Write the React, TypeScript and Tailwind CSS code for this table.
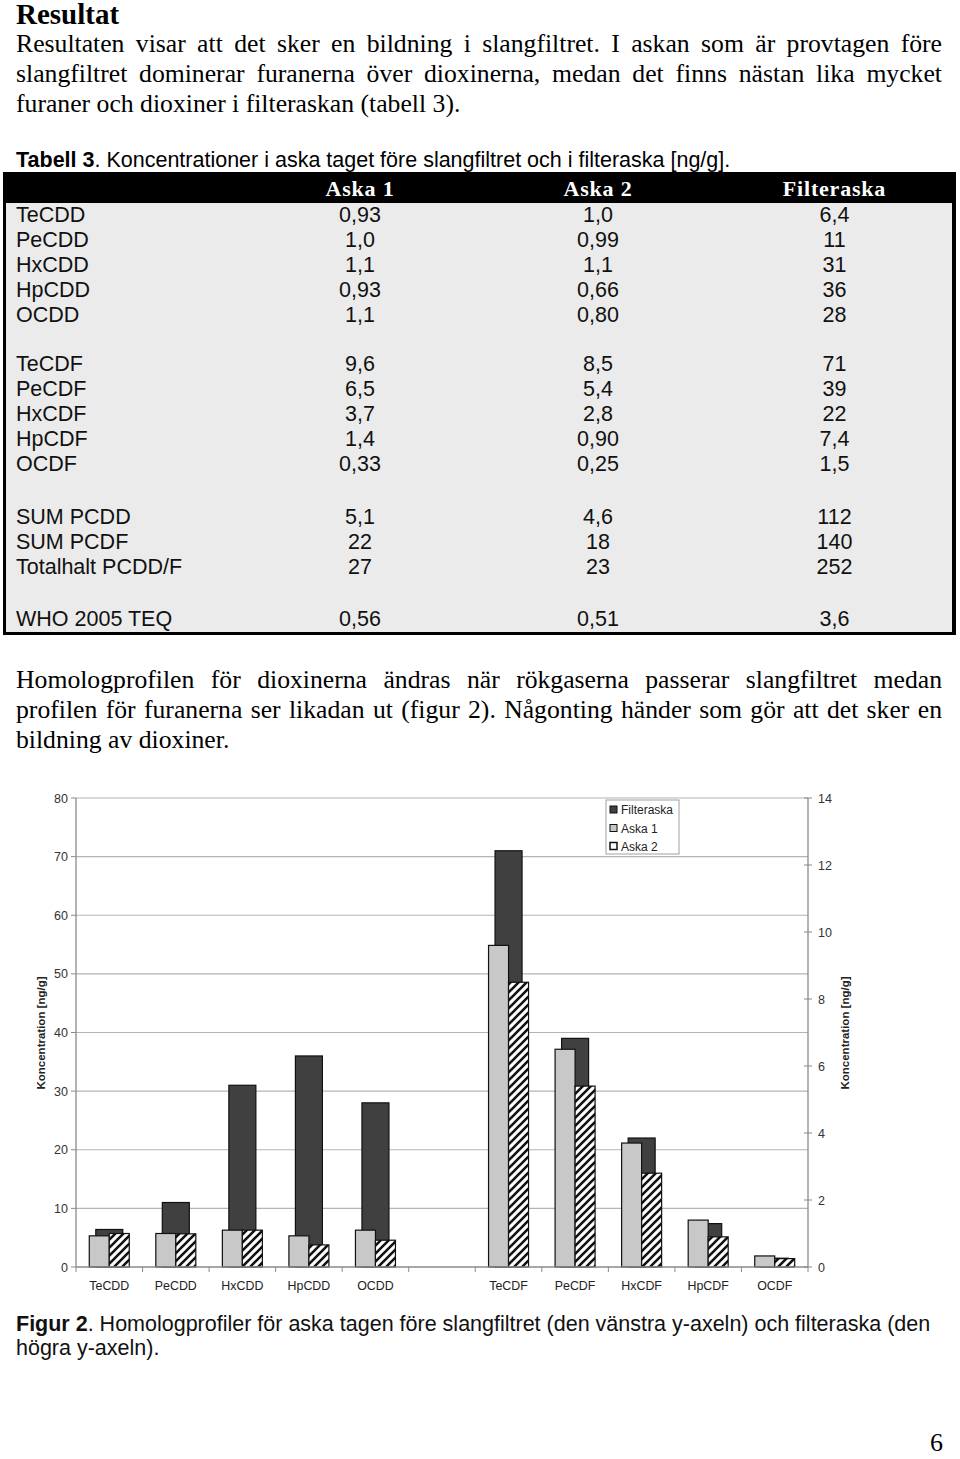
import React from 'react';

type Row = { label: string; a1: string; a2: string; f: string };

const dioxinRows: Row[] = [
  { label: 'TeCDD', a1: '0,93', a2: '1,0', f: '6,4' },
  { label: 'PeCDD', a1: '1,0', a2: '0,99', f: '11' },
  { label: 'HxCDD', a1: '1,1', a2: '1,1', f: '31' },
  { label: 'HpCDD', a1: '0,93', a2: '0,66', f: '36' },
  { label: 'OCDD', a1: '1,1', a2: '0,80', f: '28' },
];

const furanRows: Row[] = [
  { label: 'TeCDF', a1: '9,6', a2: '8,5', f: '71' },
  { label: 'PeCDF', a1: '6,5', a2: '5,4', f: '39' },
  { label: 'HxCDF', a1: '3,7', a2: '2,8', f: '22' },
  { label: 'HpCDF', a1: '1,4', a2: '0,90', f: '7,4' },
  { label: 'OCDF', a1: '0,33', a2: '0,25', f: '1,5' },
];

const sumRows: Row[] = [
  { label: 'SUM PCDD', a1: '5,1', a2: '4,6', f: '112' },
  { label: 'SUM PCDF', a1: '22', a2: '18', f: '140' },
  { label: 'Totalhalt PCDD/F', a1: '27', a2: '23', f: '252' },
];

const teqRow: Row = { label: 'WHO 2005 TEQ', a1: '0,56', a2: '0,51', f: '3,6' };

// chart data: slot index 5 is left empty between the groups
const bars = [
  { name: 'TeCDD', a1: 0.93, a2: 1.0, f: 6.4 },
  { name: 'PeCDD', a1: 1.0, a2: 0.99, f: 11 },
  { name: 'HxCDD', a1: 1.1, a2: 1.1, f: 31 },
  { name: 'HpCDD', a1: 0.93, a2: 0.66, f: 36 },
  { name: 'OCDD', a1: 1.1, a2: 0.8, f: 28 },
  null,
  { name: 'TeCDF', a1: 9.6, a2: 8.5, f: 71 },
  { name: 'PeCDF', a1: 6.5, a2: 5.4, f: 39 },
  { name: 'HxCDF', a1: 3.7, a2: 2.8, f: 22 },
  { name: 'HpCDF', a1: 1.4, a2: 0.9, f: 7.4 },
  { name: 'OCDF', a1: 0.33, a2: 0.25, f: 1.5 },
];

const TableRow: React.FC<{ row: Row }> = ({ row }) => (
  <div className="grid grid-cols-[235px_238px_238px_1fr] h-[25px] items-center leading-[25px]">
    <span className="pl-[10px] whitespace-nowrap">{row.label}</span>
    <span className="text-center">{row.a1}</span>
    <span className="text-center">{row.a2}</span>
    <span className="text-center">{row.f}</span>
  </div>
);

const JLine: React.FC<{ children: React.ReactNode; last?: boolean }> = ({ children, last }) => (
  <div className={`h-[30px] leading-[30px] whitespace-nowrap ${last ? '' : 'text-justify [text-align-last:justify]'}`}>
    {children}
  </div>
);

const Chart: React.FC = () => {
  const left = 76;
  const right = 808;
  const top = 9;
  const bottom = 478;
  const slot = (right - left) / 11;
  const ly = (v: number) => bottom - v * ((bottom - top) / 80);
  const ry = (v: number) => bottom - v * ((bottom - top) / 14);
  const leftTicks = [0, 10, 20, 30, 40, 50, 60, 70, 80];
  const rightTicks = [0, 2, 4, 6, 8, 10, 12, 14];

  return (
    <svg width="960" height="510" viewBox="0 0 960 510" className="block font-['Liberation_Sans',Arial,sans-serif]">
      <defs>
        <pattern id="hatch" patternUnits="userSpaceOnUse" width="8" height="8">
          <rect width="8" height="8" fill="#fff" />
          <path d="M-2,2 L2,-2 M0,8 L8,0 M6,10 L10,6" stroke="#111" strokeWidth="2.6" />
        </pattern>
      </defs>

      {/* grid lines */}
      {leftTicks.slice(1).map(v => (
        <line key={v} x1={left} x2={right} y1={ly(v)} y2={ly(v)} stroke="#b4b4b4" strokeWidth="1.2" />
      ))}

      {/* left axis */}
      <line x1={left} x2={left} y1={top} y2={bottom} stroke="#8a8a8a" strokeWidth="1.3" />
      {leftTicks.map(v => (
        <g key={v}>
          <line x1={left - 5} x2={left} y1={ly(v)} y2={ly(v)} stroke="#8a8a8a" />
          <text x={68} y={ly(v) + 4.5} textAnchor="end" fontSize="12.5" fill="#333">{v}</text>
        </g>
      ))}

      {/* right axis */}
      <line x1={right} x2={right} y1={top} y2={bottom} stroke="#8a8a8a" strokeWidth="1.3" />
      {rightTicks.map(v => (
        <g key={v}>
          <line x1={right - 4} x2={right + 4} y1={ry(v)} y2={ry(v)} stroke="#8a8a8a" />
          <text x={818} y={ry(v) + 4.5} fontSize="12.5" fill="#333">{v}</text>
        </g>
      ))}

      {/* bars */}
      {bars.map((b, i) => {
        if (!b) return null;
        const c = left + slot * (i + 0.5);
        return (
          <g key={b.name}>
            <rect x={c - 13.5} y={ly(b.f)} width={27} height={bottom - ly(b.f)} fill="#404040" stroke="#111" strokeWidth="1.2" />
            <rect x={c - 20} y={ry(b.a1)} width={20} height={bottom - ry(b.a1)} fill="#c8c8c8" stroke="#111" strokeWidth="1.2" />
            <rect x={c} y={ry(b.a2)} width={20} height={bottom - ry(b.a2)} fill="url(#hatch)" stroke="#111" strokeWidth="1.2" />
            <text x={c} y={500.5} textAnchor="middle" fontSize="12.4" fill="#222">{b.name}</text>
          </g>
        );
      })}

      {/* x axis */}
      <line x1={left} x2={right} y1={bottom} y2={bottom} stroke="#8a8a8a" strokeWidth="1.3" />
      {Array.from({ length: 12 }, (_, k) => (
        <line key={k} x1={left + slot * k} x2={left + slot * k} y1={bottom} y2={bottom + 5} stroke="#8a8a8a" />
      ))}

      {/* axis titles */}
      <text transform="translate(45 244) rotate(-90)" textAnchor="middle" fontSize="11.5" fontWeight="bold" fill="#222">Koncentration [ng/g]</text>
      <text transform="translate(849 244) rotate(-90)" textAnchor="middle" fontSize="11.5" fontWeight="bold" fill="#222">Koncentration [ng/g]</text>

      {/* legend */}
      <rect x={606} y={11} width={73} height={54} fill="#fff" stroke="#a0a0a0" />
      <rect x={610} y={17} width={7} height={7} fill="#404040" stroke="#111" />
      <rect x={610} y={35.5} width={7} height={7} fill="#c8c8c8" stroke="#111" />
      <rect x={610} y={53.5} width={7} height={7} fill="#fff" stroke="#111" strokeWidth="1.5" />
      <text x={621} y={25} fontSize="12" fill="#222">Filteraska</text>
      <text x={621} y={43.5} fontSize="12" fill="#222">Aska 1</text>
      <text x={621} y={61.5} fontSize="12" fill="#222">Aska 2</text>
    </svg>
  );
};

export default function App() {
  return (
    <div className="w-[960px] min-h-[1459px] bg-white text-black">
      <div className="pl-[16px] pr-[18px] font-['Liberation_Serif','Times_New_Roman',serif]">
        <h1 className="text-[29px] font-bold leading-[29px]">Resultat</h1>
        <div className="text-[25.7px]">
          <JLine>Resultaten visar att det sker en bildning i slangfiltret. I askan som är provtagen före</JLine>
          <JLine>slangfiltret dominerar furanerna över dioxinerna, medan det finns nästan lika mycket</JLine>
          <JLine last>furaner och dioxiner i filteraskan (tabell 3).</JLine>
        </div>
      </div>

      <div className="pl-[16px] mt-[29px] h-[24px] leading-[24px] text-[21.5px] whitespace-nowrap font-['Liberation_Sans',Arial,sans-serif]">
        <span className="font-bold">Tabell 3</span>. Koncentrationer i aska taget före slangfiltret och i filteraska [ng/g].
      </div>

      <div className="ml-[3px] w-[953px] border-[3px] border-r-[4px] border-black bg-[#ebebeb] text-[21.5px] font-['Liberation_Sans',Arial,sans-serif] text-[#111]">
        <div className="grid grid-cols-[235px_238px_238px_1fr] h-[28px] leading-[26px] items-center bg-black text-white font-['Liberation_Serif','Times_New_Roman',serif] font-bold text-[22px] tracking-[0.8px]">
          <span />
          <span className="text-center">Aska 1</span>
          <span className="text-center">Aska 2</span>
          <span className="text-center">Filteraska</span>
        </div>
        {dioxinRows.map(r => <TableRow key={r.label} row={r} />)}
        <div className="h-[24px]" />
        {furanRows.map(r => <TableRow key={r.label} row={r} />)}
        <div className="h-[28px]" />
        {sumRows.map(r => <TableRow key={r.label} row={r} />)}
        <div className="h-[27px]" />
        <TableRow row={teqRow} />
      </div>

      <div className="pl-[16px] pr-[18px] mt-[30px] text-[25.7px] font-['Liberation_Serif','Times_New_Roman',serif]">
        <JLine>Homologprofilen för dioxinerna ändras när rökgaserna passerar slangfiltret medan</JLine>
        <JLine>profilen för furanerna ser likadan ut (figur 2). Någonting händer som gör att det sker en</JLine>
        <JLine last>bildning av dioxiner.</JLine>
      </div>

      <div className="mt-[34px]">
        <Chart />
      </div>

      <div className="pl-[16px] mt-[13px] text-[21.5px] leading-[24px] text-[#111] font-['Liberation_Sans',Arial,sans-serif]">
        <div className="whitespace-nowrap">
          <span className="font-bold">Figur 2</span>. Homologprofiler för aska tagen före slangfiltret (den vänstra y-axeln) och filteraska (den
        </div>
        <div>högra y-axeln).</div>
      </div>

      <div className="mt-[71px] pr-[17px] text-right text-[26px] leading-[24px] font-['Liberation_Serif','Times_New_Roman',serif]">
        6
      </div>
    </div>
  );
}
